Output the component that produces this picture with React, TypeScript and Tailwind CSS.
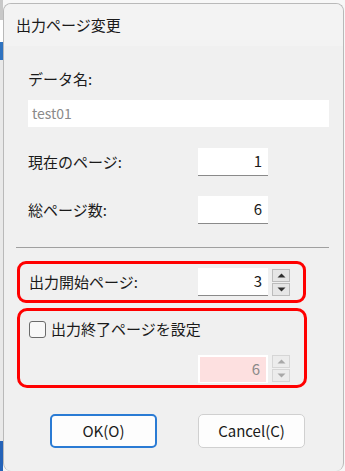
import React from 'react';

const font = { fontFamily: '"Noto Sans CJK JP", "Noto Sans", sans-serif' };

function NumBox({ value, disabled }: { value: string; disabled?: boolean }) {
  return (
    <div
      className={`w-[70px] h-[28px] flex items-center justify-end pr-[6px] text-[15px] border-b ${
        disabled ? 'bg-[#fde0e0] text-[#8a8a8a] border-white border-[2px]' : 'bg-white text-[#1a1a1a] border-b-[#8a8a8a]'
      }`}
    >
      {value}
    </div>
  );
}

function Spinner({ disabled }: { disabled?: boolean }) {
  const c = disabled ? '#a8a8a8' : '#303030';
  return (
    <div className="flex flex-col gap-[1px] ml-[4px]">
      {[0, 1].map((i) => (
        <div
          key={i}
          className={`w-[18px] h-[13px] flex items-center justify-center border ${
            disabled ? 'bg-[#ececec] border-[#d6d6d6]' : 'bg-[#e6e6e6] border-[#bcbcbc]'
          }`}
        >
          <svg width="9" height="5" viewBox="0 0 9 5">
            {i === 0 ? <path d="M0.5 4.5 L4.5 0.5 L8.5 4.5 Z" fill={c} /> : <path d="M0.5 0.5 L4.5 4.5 L8.5 0.5 Z" fill={c} />}
          </svg>
        </div>
      ))}
    </div>
  );
}

export default function App() {
  return (
    <div className="w-[345px] h-[471px] flex bg-[#f7f7f7] overflow-hidden" style={font}>
      <div className="w-[3px] flex flex-col">
        <div className="h-[20px] bg-[#c8c8c8]" />
        <div className="h-[22px] bg-white" />
        <div className="h-[18px] bg-[#2f73c0]" />
        <div className="flex-1 bg-[#e9e9e9]" />
        <div className="h-[30px] bg-[#2563b8]" />
      </div>
      <div className="flex-1 mt-[3px] mr-[1px] rounded-t-[8px] rounded-b-[8px] border border-[#b9b9b9] border-b-0 bg-[#f0f0f0] flex flex-col overflow-hidden">
        <div className="h-[42px] bg-[#f3f3f3] flex items-center pl-[12px] text-[15px] text-[#1a1a1a]">出力ページ変更</div>

        <div className="flex flex-col px-[24px] pt-[22px] text-[15px] text-[#1a1a1a]">
          <div className="leading-[22px]">データ名:</div>
          <div className="mt-[10px] h-[27px] w-[301px] bg-white flex items-center pl-[4px] text-[14px] text-[#8a8a8a]">test01</div>

          <div className="mt-[21px] flex items-center">
            <div className="w-[170px]">現在のページ:</div>
            <NumBox value="1" />
          </div>
          <div className="mt-[20px] flex items-center">
            <div className="w-[170px]">総ページ数:</div>
            <NumBox value="6" />
          </div>
        </div>

        <div className="mx-[12px] mt-[23px] h-[1px] w-[313px] bg-[#a0a0a0]" />

        <div className="mx-[13px] mt-[13px] w-[289px] h-[42px] border-[3px] border-[#ff0000] rounded-[9px] flex items-center pl-[9px] text-[15px] text-[#1a1a1a]">
          <div className="w-[169px]">出力開始ページ:</div>
          <NumBox value="3" />
          <Spinner />
        </div>

        <div className="mx-[13px] mt-[5px] w-[290px] h-[80px] border-[3px] border-[#ff0000] rounded-[10px] flex flex-col pl-[9px] pt-[7px] text-[15px] text-[#1a1a1a]">
          <div className="flex items-center">
            <div className="w-[17px] h-[17px] rounded-[3px] border border-[#6b6b6b] bg-[#f8f8f8]" />
            <div className="ml-[5px]">出力終了ページを設定</div>
          </div>
          <div className="mt-[14px] ml-[169px] flex items-center">
            <NumBox value="6" disabled />
            <Spinner disabled />
          </div>
        </div>

        <div className="mt-[26px] flex items-center pl-[46px] gap-[41px] text-[15px] text-[#1a1a1a]">
          <button className="w-[107px] h-[34px] rounded-[5px] border-[2px] border-[#2a7bd4] bg-[#fdfdfd] flex items-center justify-center">OK(O)</button>
          <button className="w-[107px] h-[34px] rounded-[5px] border border-[#d0d0d0] bg-[#fdfdfd] flex items-center justify-center">Cancel(C)</button>
        </div>
      </div>
    </div>
  );
}
